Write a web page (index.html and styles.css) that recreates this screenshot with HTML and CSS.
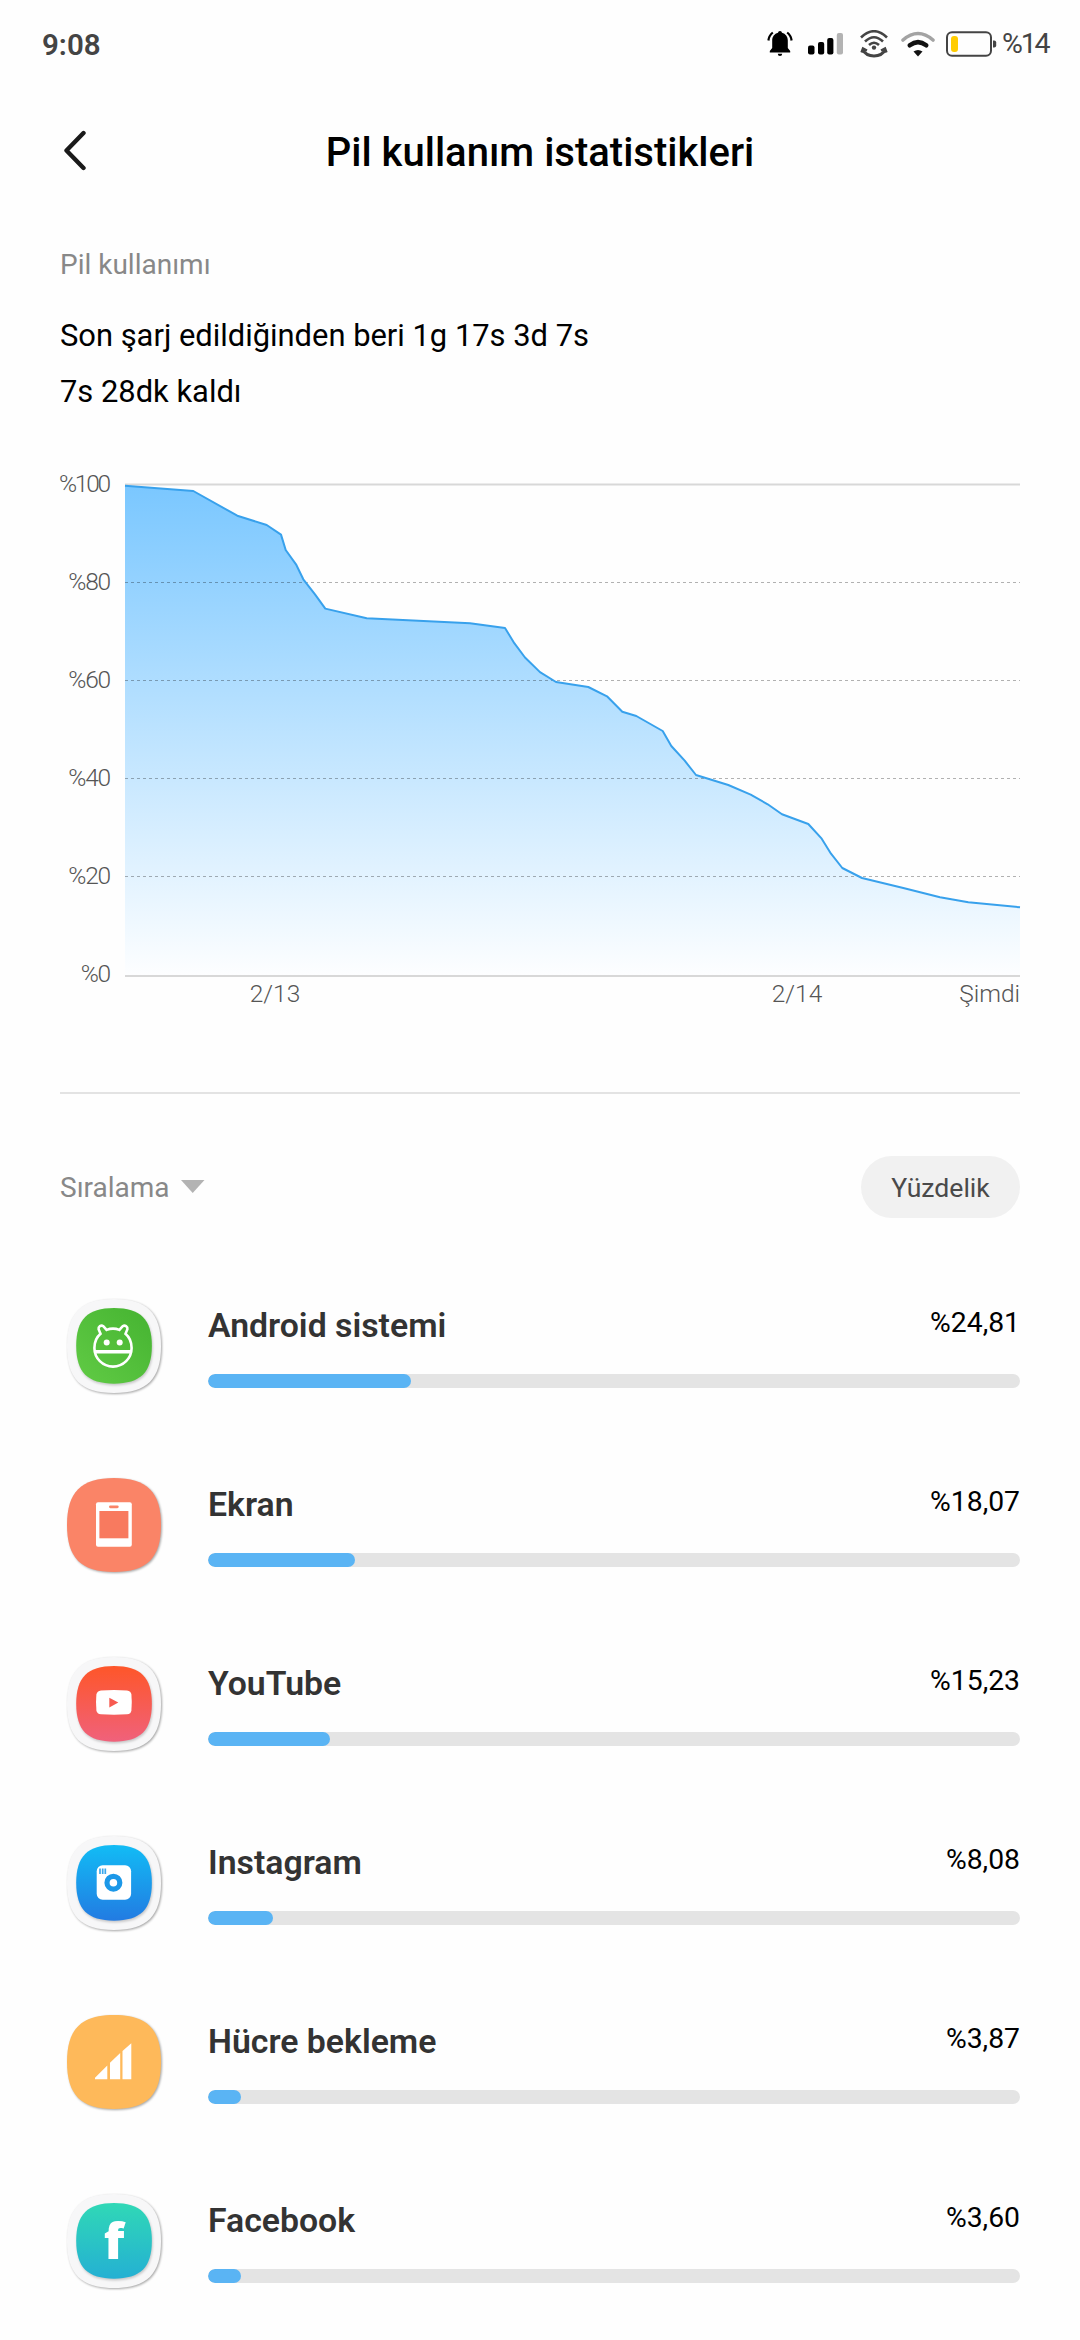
FILE: index.html
```html
<!DOCTYPE html>
<html lang="tr">
<head>
    <meta charset="UTF-8">
    <meta name="viewport" content="width=device-width, initial-scale=1.0">
    <title>Pil kullanım istatistikleri</title>
    <link rel="stylesheet" href="styles.css">
</head>
<body>
    <div class="status-bar">
        <span class="time">9:08</span>
        <div class="status-icons">
            <svg class="bell" width="26" height="26" viewBox="0 0 26 26">
                <path d="M13 0a2 2 0 0 1 2 1.800c3.600 1 5.800 4 5.800 7.800v7.400l2.400 3v1.600H2.800V20l2.400-3V9.600c0-3.800 2.200-6.800 5.800-7.800A2 2 0 0 1 13 0zM10.800 22.800h4.400a2.200 2.200 0 0 1-4.400 0z"/>
                <path d="M5.800 1.500Q2 4.500 1.400 9.500M20.200 1.500Q24 4.500 24.600 9.500" fill="none" stroke="#000" stroke-width="2.200"/>
            </svg>
            <svg class="signal" width="36" height="22" viewBox="0 0 36 22">
                <rect x="0" y="12.500" width="6.500" height="9" rx="2"/>
                <rect x="10" y="9" width="6.200" height="12.500" rx="2"/>
                <rect x="19.200" y="5" width="6.200" height="16.500" rx="2"/>
                <rect x="28.800" y="0" width="6.200" height="21.500" rx="2" fill="#b3b3b3"/>
            </svg>
            <svg class="hotspot" width="28" height="28" viewBox="0 0 28 28" fill="none" stroke="#444" stroke-width="2.600">
                <path d="M1 7.500Q14-5 27 7.500M5 11.500Q14 3 23 11.500M9 15Q14 10.500 19 15"/>
                <path d="M2.500 19.500Q6 26 14 26T25.500 19.500" stroke-width="3"/>
                <path d="M1.500 22.500L3 18.500l4 2M26.500 22.500L25 18.500l-4 2" stroke-width="2.400"/>
                <circle cx="14" cy="17.600" r="2.200" fill="#444" stroke="none"/>
            </svg>
            <svg class="wifi" width="34" height="26" viewBox="0 0 34 26" fill="none" stroke-linecap="round">
                <path d="M2 9Q17-4 32 9" stroke="#a3a3a3" stroke-width="3.600"/>
                <path d="M8.800 14.300Q17 8 25.200 14.300" stroke="#111" stroke-width="4.600"/>
                <path d="M12.500 20.500Q17 17.500 21.500 20.500L17 25.500z" fill="#111"/>
            </svg>
            <svg class="battery" width="51" height="26" viewBox="0 0 51 26">
                <rect x="1" y="1.200" width="44" height="23.500" rx="5" fill="none" stroke="#444" stroke-width="2"/>
                <rect x="5" y="5" width="7" height="16" rx="3" fill="#fc0"/>
                <path d="M47 9.500h1.200a2 2 0 0 1 2 2v3a2 2 0 0 1-2 2H47z" fill="#444"/>
            </svg>
            <span class="battery-text">%14</span>
        </div>
    </div>

    <div class="header">
        <svg class="back" width="26" height="42" viewBox="0 0 26 42">
            <path d="M21.500 3L4.500 20.500L21.500 38" fill="none" stroke="#1a1a1a" stroke-width="4.400" stroke-linecap="round" stroke-linejoin="round"/>
        </svg>
        <h1>Pil kullanım istatistikleri</h1>
    </div>

    <div class="container">
        <h2>Pil kullanımı</h2>
        <p class="summary">Son şarj edildiğinden beri 1g 17s 3d 7s<br>7s 28dk kaldı</p>

        <svg class="chart" width="960" height="560" viewBox="60 460 960 560">
            <defs>
                <linearGradient id="area" x1="0" y1="485" x2="0" y2="975" gradientUnits="userSpaceOnUse">
                    <stop offset="0" stop-color="#7ac7ff"/>
                    <stop offset="1" stop-color="#fdfeff"/>
                </linearGradient>
            </defs>
            <path class="axis" d="M125 484.500H1020"/>
            <path fill="url(#area)" d="M125 485.700L193.300 491L237.300 515.700L266.700 525L281 534.600L285.700 550L296 564.300L303.300 579.300L315 594.300L325.300 608.600L366.700 618.200L470 623.200L505 627.900L514.300 643.200L525 657.500L540 672.100L556 682L588.300 687L607 696.300L622.300 711.700L636.300 716L662.700 731L671.300 746L684.700 760.700L696 775L728.300 785L750.700 794.700L767.700 804.300L782 814.300L808.300 824L821.700 838.700L831 853.700L842.300 868L862 878L903.300 888L940 897.300L968.300 902.300L1020 907.300V975H125z"/>
            <path class="grid" d="M125 582.500H1020M125 680.500H1020M125 778.500H1020M125 876.500H1020"/>
            <path class="line" d="M125 485.700L193.300 491L237.300 515.700L266.700 525L281 534.600L285.700 550L296 564.300L303.300 579.300L315 594.300L325.300 608.600L366.700 618.200L470 623.200L505 627.900L514.300 643.200L525 657.500L540 672.100L556 682L588.300 687L607 696.300L622.300 711.700L636.300 716L662.700 731L671.300 746L684.700 760.700L696 775L728.300 785L750.700 794.700L767.700 804.300L782 814.300L808.300 824L821.700 838.700L831 853.700L842.300 868L862 878L903.300 888L940 897.300L968.300 902.300L1020 907.300"/>
            <path class="axis" d="M125 976H1020"/>
            <g class="y-label">
                <text class="full" x="109" y="492">%100</text>
                <text x="110" y="590">%80</text>
                <text x="110" y="688">%60</text>
                <text x="110" y="786">%40</text>
                <text x="110" y="884">%20</text>
                <text x="110" y="982">%0</text>
            </g>
            <g class="x-label">
                <text x="275" y="1002">2/13</text>
                <text x="797" y="1002">2/14</text>
                <text class="now" x="1020" y="1002">Şimdi</text>
            </g>
        </svg>

        <div class="sort-bar">
            <span class="sort">Sıralama</span>
            <svg width="24" height="14" viewBox="0 0 24 14"><path d="M0 0H23.500L11.700 13z" fill="#b3b3b3"/></svg>
            <button>Yüzdelik</button>
        </div>

        <div class="app-list">
            <div class="app">
                <svg class="icon" viewBox="0 0 94 94">
                    <defs>
                        <linearGradient id="green" x1="0" y1="1" x2="1" y2="0">
                            <stop offset="0" stop-color="#61cb45"/>
                            <stop offset="1" stop-color="#45b331"/>
                        </linearGradient>
                        <path id="shape" d="M47 0C80 0 94 14 94 47S80 94 47 94S0 80 0 47S14 0 47 0z"/>
                    </defs>
                    <use href="#shape" class="frame"/>
                    <use href="#shape" class="tile" fill="url(#green)" transform="translate(9.200 9) scale(.805)"/>
                    <g fill="none" stroke="#fff" stroke-width="2.600">
                        <path d="M33.500 34.800L31.600 30.200A3 3 0 0 1 36.300 27.200L39.600 30.900Q46 28.400 52.400 30.900L55.700 27.200A3 3 0 0 1 60.400 30.200L58.500 34.800Q64.600 40 64.600 49A18.600 18.600 0 0 1 27.400 49Q27.400 40 33.500 34.800z"/>
                        <path d="M28 52.700H64" stroke-width="3.400"/>
                    </g>
                    <circle cx="39.700" cy="43.600" r="3" fill="#fff"/>
                    <circle cx="52.700" cy="43.600" r="3" fill="#fff"/>
                </svg>
                <div class="info">
                    <div class="row"><span class="name">Android sistemi</span><span class="value">%24,81</span></div>
                    <div class="bar"><div class="fill" style="width: 25%"></div></div>
                </div>
            </div>

            <div class="app">
                <svg class="icon" viewBox="0 0 94 94">
                    <use href="#shape" class="frame" fill="#fa8467"/>
                    <rect x="29" y="24.300" width="35.800" height="44.500" rx="2" fill="#fff"/>
                    <rect x="32.400" y="33" width="29" height="27.300" fill="#f87a5f"/>
                    <rect x="42" y="27.400" width="9.700" height="2.800" rx="1.400" fill="#fa8467"/>
                </svg>
                <div class="info">
                    <div class="row"><span class="name">Ekran</span><span class="value">%18,07</span></div>
                    <div class="bar"><div class="fill" style="width: 18.07%"></div></div>
                </div>
            </div>

            <div class="app">
                <svg class="icon" viewBox="0 0 94 94">
                    <defs>
                        <linearGradient id="red" x1="0" y1="0" x2="0" y2="1">
                            <stop offset="0" stop-color="#fe5629"/>
                            <stop offset="1" stop-color="#f0617b"/>
                        </linearGradient>
                    </defs>
                    <use href="#shape" class="frame"/>
                    <use href="#shape" class="tile" fill="url(#red)" transform="translate(9.200 9) scale(.805)"/>
                    <path d="M34 33.500Q47 32.500 60 33.500Q64 34 64.400 37.500Q65.200 45.300 64.400 53.500Q64 57 60 57.300Q47 58.200 34 57.300Q30 57 29.400 53.500Q28.600 45.300 29.400 37.500Q30 34 34 33.500z" fill="#fff"/>
                    <path d="M42.300 40.800L51.300 45.600L42.300 50.400z" fill="#f75a50"/>
                </svg>
                <div class="info">
                    <div class="row"><span class="name">YouTube</span><span class="value">%15,23</span></div>
                    <div class="bar"><div class="fill" style="width: 15%"></div></div>
                </div>
            </div>

            <div class="app">
                <svg class="icon" viewBox="0 0 94 94">
                    <defs>
                        <linearGradient id="blue" x1="0" y1="0" x2="0" y2="1">
                            <stop offset="0" stop-color="#12bcf5"/>
                            <stop offset="1" stop-color="#227be2"/>
                        </linearGradient>
                    </defs>
                    <use href="#shape" class="frame"/>
                    <use href="#shape" class="tile" fill="url(#blue)" transform="translate(9.200 9) scale(.805)"/>
                    <rect x="29.700" y="29.300" width="34.400" height="34.400" rx="6" fill="#fff"/>
                    <circle cx="46.400" cy="46.700" r="6.400" fill="none" stroke="#1c98e8" stroke-width="5.200"/>
                    <path d="M33 32.600v5.400M35.700 32.600v5.400M38.300 32.600v5.400" stroke="#3ba8ec" stroke-width="1.700"/>
                </svg>
                <div class="info">
                    <div class="row"><span class="name">Instagram</span><span class="value">%8,08</span></div>
                    <div class="bar"><div class="fill" style="width: 8.02%"></div></div>
                </div>
            </div>

            <div class="app">
                <svg class="icon" viewBox="0 0 94 94">
                    <use href="#shape" class="frame" fill="#feb95a"/>
                    <path d="M28 64.200V62.800L40.300 50.500V64.200zM43 64.200V47.700L53.200 38V64.200zM55.500 64.200V36L64.300 28.300V64.200z" fill="#fff"/>
                </svg>
                <div class="info">
                    <div class="row"><span class="name">Hücre bekleme</span><span class="value">%3,87</span></div>
                    <div class="bar"><div class="fill" style="width: 4.06%"></div></div>
                </div>
            </div>

            <div class="app">
                <svg class="icon" viewBox="0 0 94 94">
                    <defs>
                        <linearGradient id="teal" x1="0" y1="0" x2="0" y2="1">
                            <stop offset="0" stop-color="#30d8b6"/>
                            <stop offset="1" stop-color="#24b0d3"/>
                        </linearGradient>
                    </defs>
                    <use href="#shape" class="frame"/>
                    <use href="#shape" class="tile" fill="url(#teal)" transform="translate(9.200 9) scale(.805)"/>
                    <text class="letter" x="47" y="65">f</text>
                </svg>
                <div class="info">
                    <div class="row"><span class="name">Facebook</span><span class="value">%3,60</span></div>
                    <div class="bar"><div class="fill" style="width: 4.06%"></div></div>
                </div>
            </div>
        </div>
    </div>
</body>
</html>
```
FILE: styles.css
```css
* {
    margin: 0;
    padding: 0;
    box-sizing: border-box;
}
body {
    font-family: Roboto, sans-serif;
    background-color: #fefefe;
    color: #000;
    min-height: 100vh;
}
svg {
    display: block;
    flex-shrink: 0;
}

/* Status bar */
.status-bar {
    height: 88px;
    padding: 0 32px 0 42px;
    display: flex;
    justify-content: space-between;
    align-items: center;
    color: #444;
}
.time {
    font-size: 29.5px;
    font-weight: 600;
    padding-top: 2px;
}
.status-icons {
    display: flex;
    align-items: center;
}
.bell {
    margin-right: 15px;
}
.signal {
    margin-right: 16px;
}
.hotspot {
    margin-right: 13px;
}
.wifi {
    margin-right: 11px;
}
.battery {
    margin-right: 5px;
}
.battery-text {
    font-size: 28.5px;
    line-height: 34px;
    letter-spacing: -2.2px;
    width: 46px;
    white-space: nowrap;
}

/* Header */
.header {
    height: 128px;
    padding: 0 60px;
    display: grid;
    grid-template-columns: 60px 1fr 60px;
    align-items: center;
}
.header h1 {
    padding-top: 1px;
    font-size: 40px;
    font-weight: 500;
    line-height: 48px;
    text-align: center;
}
.back {
    margin: 0 0 3px 2px;
}

.container {
    padding: 29px 60px 0;
}
.container h2 {
    font-size: 28px;
    font-weight: 400;
    line-height: 40px;
    color: #888;
}
.summary {
    margin-top: 23px;
    font-size: 30.9px;
    line-height: 56px;
}

/* Chart */
.chart {
    margin-top: 40px;
    overflow: visible;
}
.axis {
    fill: none;
    stroke: #d8d8d8;
    stroke-width: 2;
}
.grid {
    fill: none;
    stroke: #000;
    stroke-opacity: 0.3;
    stroke-width: 1;
    stroke-dasharray: 3 3;
}
.line {
    fill: none;
    stroke: #38a1ec;
    stroke-width: 2;
    stroke-linejoin: round;
}
.y-label {
    font-size: 24.5px;
    font-weight: 350;
    letter-spacing: -1.2px;
    fill: #555;
    text-anchor: end;
}
.y-label .full {
    letter-spacing: -2.2px;
}
.x-label {
    font-size: 24.5px;
    font-weight: 350;
    fill: #555;
    text-anchor: middle;
}
.x-label .now {
    text-anchor: end;
}

/* Sorting */
.sort-bar {
    margin-top: 72px;
    padding-top: 62px;
    border-top: 2px solid #e3e3e3;
    display: flex;
    align-items: center;
}
.sort {
    padding-top: 1px;
    font-size: 28px;
    color: #888;
    margin-right: 11px;
}
.sort-bar button {
    margin-left: auto;
    width: 159px;
    height: 62px;
    padding-top: 1px;
    border: none;
    border-radius: 31px;
    background-color: #f1f1f1;
    color: #4a4a4a;
    font-family: inherit;
    font-size: 26.6px;
}

/* App list */
.app-list {
    margin-top: 81px;
    display: flex;
    flex-direction: column;
    gap: 85px;
}
.app {
    height: 94px;
    padding-left: 7px;
    display: flex;
    gap: 47px;
}
.icon {
    width: 94px;
    height: 94px;
    overflow: visible;
}
.frame {
    filter: drop-shadow(1px 1.5px 1px rgba(0, 0, 0, 0.35));
}
.frame:not([fill]) {
    fill: #f7f7f8;
}
.tile {
    filter: drop-shadow(1px 2px 1px rgba(0, 0, 0, 0.2));
}
.letter {
    font-family: "Open Sans", sans-serif;
    font-size: 50px;
    font-weight: 800;
    fill: #fff;
    text-anchor: middle;
}
.info {
    flex: 1;
}
.row {
    height: 75px;
    display: flex;
    justify-content: space-between;
}
.name {
    margin-top: 7px;
    font-size: 33.8px;
    font-weight: 650;
    line-height: 40px;
    color: #333;
}
.value {
    margin-top: 4px;
    font-size: 28.3px;
    line-height: 40px;
}
.bar {
    height: 14px;
    border-radius: 7px;
    background-color: #e4e4e4;
    overflow: hidden;
}
.fill {
    height: 100%;
    border-radius: 7px;
    background-color: #5ab4f4;
}
```
